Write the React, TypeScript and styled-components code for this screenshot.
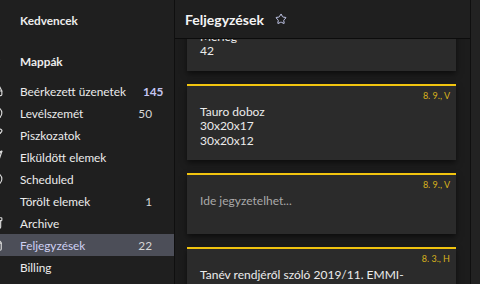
import { useEffect, useRef } from 'react';
import styled, { createGlobalStyle } from 'styled-components';
import { Archive, Ban, ChevronDown, Clock, Inbox, Pencil, Send, Star, StickyNote, Trash2, Receipt } from 'lucide-react';

const GlobalStyle = createGlobalStyle`
  html, body {
    margin: 0;
    padding: 0;
    background: #1f1f1f;
  }
  body {
    font-family: "Segoe UI", Lato, "Noto Sans", sans-serif;
    color: #e8e8e8;
  }
`;

const Shell = styled.div`
  display: flex;
  width: 480px;
  height: 284px;
  overflow: hidden;
  background: #1f1f1f;
`;

const Sidebar = styled.nav`
  width: 175px;
  flex: none;
  border-right: 1px solid #0f0f0f;
  background: #1f1f1f;
  overflow: hidden;
  padding-top: 9px;
  box-sizing: border-box;
`;

const Section = styled.div`
  display: flex;
  flex-direction: column;
  margin-bottom: 19px;
`;

const Row = styled.div<{ $selected?: boolean; $heading?: boolean }>`
  display: flex;
  align-items: center;
  gap: 17px;
  height: 22px;
  margin-left: -13px;
  padding-right: 22px;
  font-size: 11.8px;
  white-space: nowrap;
  font-weight: ${(p) => (p.$heading ? 700 : 400)};
  color: ${(p) => (p.$selected ? '#cfd1f4' : '#ececec')};
  background: ${(p) => (p.$selected ? '#4c4e58' : 'transparent')};
`;

const RowIcon = styled.span`
  width: 16px;
  flex: none;
  display: flex;
  align-items: center;
  justify-content: flex-end;
  color: #d8d8d8;
`;

const Count = styled.span<{ $strong?: boolean }>`
  margin-left: auto;
  font-weight: ${(p) => (p.$strong ? 700 : 400)};
  color: ${(p) => (p.$strong ? '#c4c6f2' : '#d6d6d6')};
`;

const Main = styled.section`
  width: 295px;
  flex: none;
  display: flex;
  flex-direction: column;
  background: #1c1c1c;
  border-right: 1px solid #0f0f0f;
`;

const Header = styled.header`
  height: 38px;
  flex: none;
  display: flex;
  align-items: center;
  gap: 11px;
  padding-left: 10px;
  background: #1f1f1f;
  border-bottom: 1px solid #0c0c0c;
`;

const Title = styled.h1`
  margin: 0;
  font-size: 14px;
  font-weight: 700;
  color: #f4f4f4;
`;

const StarIcon = styled(Star)`
  color: #c8cdf0;
`;

const List = styled.div`
  flex: 1;
  overflow: hidden;
  display: flex;
  flex-direction: column;
  gap: 13px;
  padding: 13px 14px 20px 12px;
`;

const Card = styled.article`
  flex: none;
  background: #2b2b2b;
  border-top: 2px solid #f1c40f;
  padding: 4px 6px 12px 13px;
  box-shadow: 0 3px 6px rgba(0, 0, 0, 0.55);
`;

const CardDate = styled.div`
  text-align: right;
  font-size: 9px;
  line-height: 12px;
  color: #d9b21c;
`;

const CardBody = styled.div<{ $placeholder?: boolean }>`
  margin-top: 3px;
  min-height: 28px;
  font-size: 12px;
  line-height: 14.5px;
  color: ${(p) => (p.$placeholder ? '#a9a9a9' : '#ececec')};
  white-space: pre-line;
`;

const Aside = styled.div`
  flex: 1;
  background: #222222;
`;

const folders = [
  { name: 'Beérkezett üzenetek', count: '145', strong: true, icon: <Inbox size={14} /> },
  { name: 'Levélszemét', count: '50', icon: <Ban size={14} /> },
  { name: 'Piszkozatok', icon: <Pencil size={14} /> },
  { name: 'Elküldött elemek', icon: <Send size={14} /> },
  { name: 'Scheduled', icon: <Clock size={14} /> },
  { name: 'Törölt elemek', count: '1', icon: <Trash2 size={14} color="transparent" /> },
  { name: 'Archive', icon: <Archive size={14} /> },
  { name: 'Feljegyzések', count: '22', selected: true, icon: <StickyNote size={14} /> },
  { name: 'Billing', icon: <Receipt size={14} color="transparent" /> },
];

const notes = [
  { date: '8. 9., V', text: 'Tauro doboz\nMérleg\n42' },
  { date: '8. 9., V', text: 'Tauro doboz\n30x20x17\n30x20x12' },
  { date: '8. 9., V', text: 'Ide jegyzetelhet...', placeholder: true },
  { date: '8. 3., H', text: 'Tanév rendjéről szóló 2019/11. EMMI-\nrendelet' },
];

const App = () => {
  const listRef = useRef<HTMLDivElement>(null);

  useEffect(() => {
    if (listRef.current) {
      listRef.current.scrollTop = 58;
    }
  }, []);

  return (
    <>
      <GlobalStyle />
      <Shell>
        <Sidebar>
          <Section>
            <Row $heading>
              <RowIcon />
              <span>Kedvencek</span>
            </Row>
          </Section>
          <Section>
            <Row $heading>
              <RowIcon>
                <ChevronDown size={14} />
              </RowIcon>
              <span>Mappák</span>
            </Row>
            <div style={{ height: 8 }} />
            {folders.map((f) => (
              <Row key={f.name} $selected={f.selected}>
                <RowIcon>{f.icon}</RowIcon>
                <span>{f.name}</span>
                {f.count && <Count $strong={f.strong}>{f.count}</Count>}
              </Row>
            ))}
          </Section>
        </Sidebar>
        <Main>
          <Header>
            <Title>Feljegyzések</Title>
            <StarIcon size={12} />
          </Header>
          <List ref={listRef}>
            {notes.map((n, i) => (
              <Card key={i}>
                <CardDate>{n.date}</CardDate>
                <CardBody $placeholder={n.placeholder}>{n.text}</CardBody>
              </Card>
            ))}
          </List>
        </Main>
        <Aside />
      </Shell>
    </>
  );
};

export default App;
